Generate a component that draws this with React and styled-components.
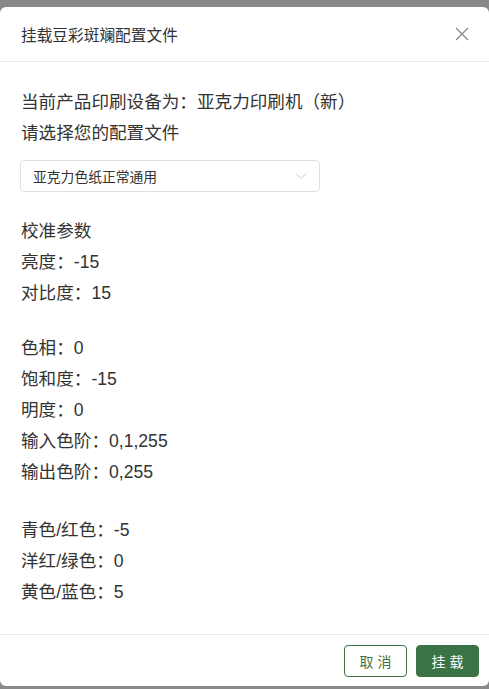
import React from "react";
import styled, { createGlobalStyle } from "styled-components";

const Global = createGlobalStyle`
  html, body { margin: 0; padding: 0; background: #888888; }
  body { font-family: "Liberation Sans", "Noto Sans CJK SC", sans-serif; }
  * { box-sizing: border-box; }
`;

const Page = styled.div`
  height: 689px;
  padding: 7px 0 3px 0;
  display: flex;
  flex-direction: column;
`;

const Dialog = styled.div`
  flex: 1;
  background: #fff;
  border-radius: 6px;
  display: flex;
  flex-direction: column;
`;

const Header = styled.div`
  height: 55px;
  padding: 0 20px 0 21px;
  display: flex;
  align-items: center;
  justify-content: space-between;
  border-bottom: 1px solid #ebebeb;
`;

const Title = styled.div`
  font-size: 15.7px;
  color: #333;
`;

const Close = styled.button`
  border: 0;
  background: none;
  padding: 0;
  width: 14px;
  height: 14px;
  display: flex;
  cursor: pointer;
`;

const Body = styled.div`
  flex: 1;
  padding: 25px 21px 0 21px;
  color: #333;
  font-size: 17.6px;
`;

const Line = styled.div`
  line-height: 31px;
  height: 31px;
  margin-bottom: ${(p) => p.$gap || 0}px;
`;

const Select = styled.div`
  width: 300px;
  height: 32px;
  margin: 11px 0 24px -1px;
  border: 1px solid #dcdfe6;
  border-radius: 4px;
  display: flex;
  align-items: center;
  justify-content: space-between;
  padding: 0 12px 0 12px;
  font-size: 13.8px;
  color: #333;
`;

const Footer = styled.div`
  height: 52px;
  border-top: 1px solid #ebebeb;
  display: flex;
  justify-content: flex-end;
  align-items: center;
  gap: 9px;
  padding: 0 10px 0 0;
`;

const Button = styled.button`
  width: 63px;
  height: 32px;
  border-radius: 4px;
  font-family: "Liberation Sans", "Noto Sans CJK SC", sans-serif;
  font-size: 14px;
  letter-spacing: 4px;
  text-indent: 4px;
  border: 1px solid #3b7444;
  background: ${(p) => (p.$primary ? "#3b7444" : "#fff")};
  color: ${(p) => (p.$primary ? "#fff" : "#3b7444")};
  cursor: pointer;
`;

export default function App() {
  return (
    <>
      <Global />
      <Page>
        <Dialog>
          <Header>
            <Title>挂载豆彩斑斓配置文件</Title>
            <Close aria-label="close">
              <svg width="14" height="14" viewBox="0 0 14 14">
                <path d="M1 1L13 13M13 1L1 13" stroke="#888" strokeWidth="1.3" fill="none" />
              </svg>
            </Close>
          </Header>
          <Body>
            <Line>当前产品印刷设备为：亚克力印刷机（新）</Line>
            <Line>请选择您的配置文件</Line>
            <Select>
              <span>亚克力色纸正常通用</span>
              <svg width="12" height="8" viewBox="0 0 12 8">
                <path d="M1 1.5L6 6.5L11 1.5" stroke="#c0c4cc" strokeWidth="1" fill="none" />
              </svg>
            </Select>
            <Line>校准参数</Line>
            <Line>亮度：-15</Line>
            <Line $gap={24}>对比度：15</Line>
            <Line>色相：0</Line>
            <Line>饱和度：-15</Line>
            <Line>明度：0</Line>
            <Line>输入色阶：0,1,255</Line>
            <Line $gap={27}>输出色阶：0,255</Line>
            <Line>青色/红色：-5</Line>
            <Line>洋红/绿色：0</Line>
            <Line>黄色/蓝色：5</Line>
          </Body>
          <Footer>
            <Button>取消</Button>
            <Button $primary>挂载</Button>
          </Footer>
        </Dialog>
      </Page>
    </>
  );
}
